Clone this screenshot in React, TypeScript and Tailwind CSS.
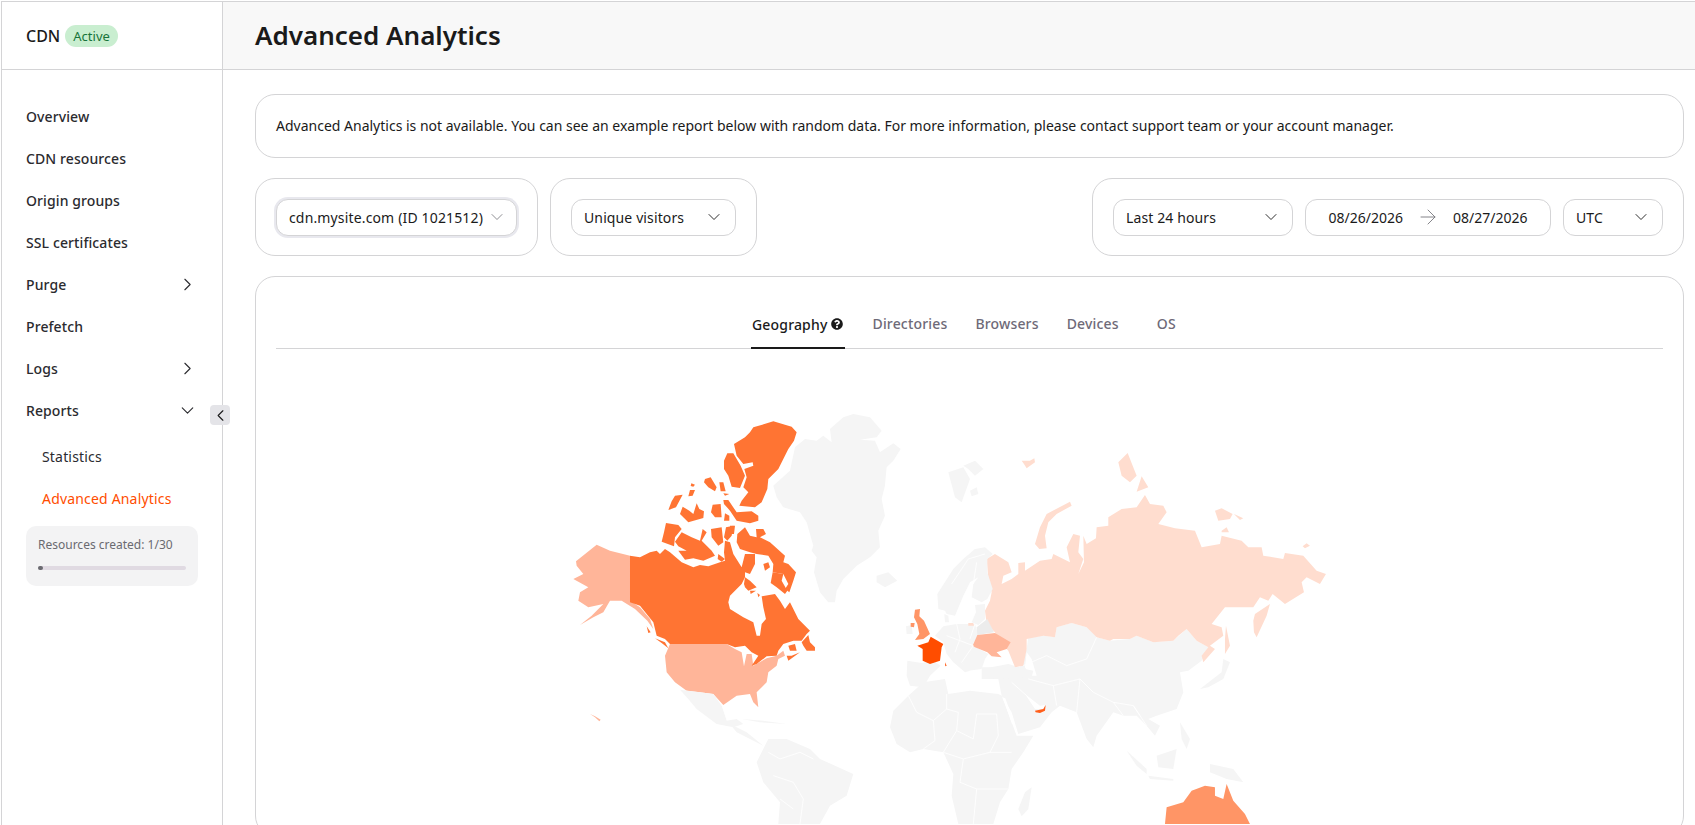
import { ArrowRight, ChevronDown, ChevronLeft, ChevronRight } from 'lucide-react';
import { FaQuestionCircle } from 'react-icons/fa';

const navItems = [
  { label: 'Overview' },
  { label: 'CDN resources' },
  { label: 'Origin groups' },
  { label: 'SSL certificates' },
  { label: 'Purge', icon: 'right' },
  { label: 'Prefetch' },
  { label: 'Logs', icon: 'right' },
  { label: 'Reports', icon: 'down' },
];

const grey = '#f5f5f5';
const canada = '#ff7433';
const usa = '#ffb599';
const uk = '#ff9566';
const russia = '#ffddcf';

type Shape = [string, string];

// each group below is traced at 3x from a crop of the map, see the translate on its <g>
const westShapes: Shape[] = [
  [grey, 'M640 260L690 215 705 145 735 120 770 125 790 110 815 130 810 90 850 55 880 45 930 55 965 95 950 115 900 122 945 125 960 160 1000 133 1022 150 1000 185 980 205 975 260 965 300 975 350 955 395 960 445 930 475 890 500 850 540 830 575 825 610 805 610 780 580 762 520 770 475 755 455 760 440 740 370 720 340 670 325 650 295Z'],
  [grey, 'M950 530L985 520 1012 545 975 565 950 550Z'],
  [usa, 'M48 487L110 437 150 455 210 470 210 605 240 625 270 660 280 690 262 665 225 630 185 605 150 605 130 640 100 655 60 678 95 650 130 615 85 625 55 605 60 580 85 565 40 540 70 525 50 500Z'],
  [usa, 'M330 735L500 735 525 750 545 760 552 802 560 765 575 765 580 800 620 778 650 770 670 755 675 770 655 780 650 800 625 820 620 850 590 880 595 925 580 910 570 885 530 890 490 918 460 885 420 880 380 875 345 850 320 820 315 770Z'],
  [usa, 'M90 945L105 952 122 962 118 967 105 955Z'],
  [grey, 'M360 872L420 880 460 885 485 920 500 965 530 960 550 975 520 985 470 975 410 930 385 900Z'],
  [grey, 'M510 975L560 1000 610 1040 570 1020 530 1000ZM545 960L610 965 680 975 600 970Z'],
  [grey, 'M590 1090L625 1020 680 1020 750 1050 780 1080 880 1125 860 1190 810 1220 780 1275 655 1275 660 1210 610 1150Z'],
];

const westBorders = [
  'M625 1060L660 1080 720 1060 760 1080',
  'M640 1130L700 1150 730 1200 720 1275',
  'M660 1200L700 1230',
  'M995 960L1060 990 1120 960 1190 935 1260 945 1320 940',
  'M1060 990L1050 1050M1120 960L1130 1010 1190 1030 1260 1020',
  'M1190 935L1200 1020 1180 1090 1270 1060',
];

const arcticShapes: Shape[] = [
  [canada, 'M310 40L370 22 425 38 440 55 432 80 415 105 400 135 385 165 355 195 352 225 335 265 315 280 268 275 275 260 295 235 280 220 290 190 283 165 310 155 308 145 280 150 260 125 252 90 285 70 300 55Z'],
  [canada, 'M232 118L250 118 272 155 285 185 270 222 245 218 235 185 222 165 222 140Z'],
  [canada, 'M165 195L182 190 200 220 195 232 175 220 162 205ZM208 205L220 205 227 232 212 232ZM124 208L135 212 130 218 122 216ZM120 228L135 228 128 245 115 247ZM220 238L238 240 225 245ZM75 245L98 242 78 280 55 288 65 262Z'],
  [canada, 'M98 278L118 290 130 300 140 268 148 285 162 292 160 312 115 325 90 300ZM188 272L212 270 215 310 195 310 183 295ZM225 298L238 305 238 320 222 320Z'],
  [canada, 'M220 258L235 258 260 295 305 292 325 305 325 320 300 328 260 320 240 290 222 270Z'],
];

const midArcticShapes: Shape[] = [
  [canada, 'M48 42L85 48 95 60 75 85 72 112 35 98 42 70Z'],
  [canada, 'M95 70L125 85 150 95 158 60 170 70 155 95 185 125 195 140 160 155 130 148 105 152 85 125 110 125 85 112 75 98Z'],
  [canada, 'M183 60L215 55 220 100 205 110 185 85ZM228 55L250 50 245 80 232 95 222 85ZM205 135L225 150 215 158 203 150Z'],
];

const baffinShapes: Shape[] = [
  [canada, 'M22 75L45 55 60 80 80 85 78 60 100 60 108 75 90 85 120 100 165 140 160 160 175 165 198 190 190 215 178 250 165 240 175 225 160 195 128 190 130 165 115 140 80 135 60 130 30 120 20 100Z'],
  [canada, 'M128 190L160 195 155 215 172 245 165 255 140 235 122 222Z'],
  [canada, 'M100 165L115 160 120 175 105 185ZM0 50L15 50 12 75 0 75Z'],
  [canada, 'M45 205L60 215 80 235 55 245 45 235 42 225ZM60 245L78 245 62 255ZM82 252L90 258 85 265Z'],
];

const canadaShapes: Shape[] = [
  [canada, 'M30 50L60 55 90 40 110 35 120 45 135 30 150 40 185 70 220 85 240 78 265 82 300 70 315 65 312 40 315 5 330 10 340 45 365 85 375 45 405 45 405 75 390 105 375 100 375 115 365 135 330 170 325 190 330 210 370 235 400 250 410 290 420 290 425 255 438 240 430 205 425 172 465 165 480 185 495 210 510 190 535 240 570 275 560 285 545 305 520 305 490 315 475 335 470 350 440 352 410 375 395 380 415 350 395 340 375 320 345 325 320 315 150 315 135 300 110 290 100 250 60 200 30 190Z'],
  [canada, 'M545 310L565 288 570 310 585 325 585 335 560 335 550 320ZM515 350L540 340 505 365 500 350ZM505 320L525 315 530 335 510 335ZM80 262L92 280 85 282ZM105 298L135 310 145 328 125 312Z'],
];

const eastShapes: Shape[] = [
  [grey, 'M205 160L250 145 270 180 245 250 225 235ZM250 140L285 125 310 150 285 170 265 150ZM270 215L290 205 295 225 275 232Z'],
  [grey, 'M445 655L490 650 525 655 530 625 575 612 620 625 650 655 690 665 750 660 770 650 820 670 880 665 920 630 950 665 985 685 965 725 925 755 900 760 910 820 890 870 830 890 805 900 840 920 825 950 800 920 770 890 730 890 700 880 650 950 640 985 620 960 590 880 540 860 515 880 480 925 415 945 395 880 365 830 355 780 305 780 305 750 385 735 420 745 440 690Z'],
  [grey, 'M30 925L40 875 85 830 130 790 195 780 205 825 270 815 355 825 365 830 395 910 410 950 460 950 430 1000 395 1050 385 1110 360 1150 340 1215 235 1215 215 1130 220 1065 190 1000 130 990 90 1000 50 975Z'],
  [grey, 'M435 1120L455 1105 445 1170 425 1192 415 1170ZM740 995L800 1050 800 1065 770 1040ZM805 1070L880 1080 880 1085 810 1080ZM830 1010L890 990 880 1050 835 1045ZM900 910L930 960 920 990 905 960ZM990 1035L1060 1050 1090 1090 1040 1080 990 1060ZM960 810L1025 760 1030 720 1050 730 1030 780 985 805Z'],
  ['#ffffff', 'M440 700L455 720 470 770 450 770 435 745ZM435 825L480 860 495 858 490 870 465 870ZM368 835L376 838 404 915 396 915Z'],
  [russia, 'M320 420L345 405 385 430 395 460 370 470 365 495 395 480 415 465 415 432 435 430 435 455 480 425 515 420 520 405 570 430 560 385 580 345 600 350 595 400 610 420 595 465 612 430 610 350 620 375 648 358 650 325 685 320 685 295 725 270 770 265 795 228 810 255 850 260 860 280 835 315 885 328 945 335 965 385 1020 375 1025 350 1085 365 1105 385 1145 385 1150 410 1210 420 1215 402 1270 410 1310 455 1338 465 1320 495 1280 475 1265 490 1272 520 1215 555 1178 525 1165 545 1140 535 1120 565 1085 565 1035 565 995 615 1025 625 1030 650 990 680 1005 690 970 730 965 710 985 685 950 665 920 630 895 650 880 665 820 670 770 650 750 660 700 660 690 665 650 655 620 625 575 612 530 625 525 655 490 650 440 660 440 690 430 740 405 745 385 695 355 660 345 640 320 615 315 575 330 545 335 520 325 480Z'],
  [russia, 'M465 375L480 325 500 285 570 248 575 260 530 285 505 310 495 350 500 388 478 390ZM715 130L743 102 770 170 750 190 725 170ZM785 172L805 205 770 218ZM425 125L450 125 463 118 465 130 440 148 432 135ZM1005 275L1025 268 1058 285 1050 300 1015 305ZM1062 285L1090 298 1080 303ZM1025 335L1040 325 1047 340 1025 340ZM1268 382L1280 373 1290 380 1275 388ZM1120 605L1125 585 1170 555 1160 590 1130 655 1122 640ZM1038 620L1050 680 1035 705 1035 660Z'],
  ['#ff5e1a', 'M465 875L490 870 497 858 495 875 480 882 467 880Z'],
  [uk, 'M855 1215L860 1165 910 1150 935 1115 975 1100 1005 1105 1005 1130 1030 1140 1040 1095 1060 1145 1095 1185 1110 1215Z'],
];

const eastBorders = [
  'M85 830L110 880 160 905 200 870 200 825',
  'M200 870L235 880 230 935 280 960 290 885 350 885',
  'M160 905L165 965 130 990',
  'M230 935L190 1000 250 1020 330 1000 395 1000',
  'M250 1020L240 1090 290 1110 385 1110',
  'M290 1110L280 1215',
  'M350 885L355 950 330 1000',
  'M445 780L520 800 600 780 640 820 700 850 730 890',
  'M430 740L500 710 560 740 620 720 650 655',
  'M520 800L530 860',
  'M600 780L590 880',
  'M700 850L760 860 800 920',
  'M395 790L440 830',
  'M760 860L780 890',
];

const europeShapes: Shape[] = [
  [grey, 'M112 165L160 90 190 60 225 30 255 25 278 45 262 60 262 100 278 150 262 180 245 190 215 175 220 135 235 115 210 130 190 170 165 230 140 225 135 215 115 210Z'],
  [grey, 'M225 198L255 195 255 240 235 258 215 250 228 220ZM133 225L145 230 147 250 135 250Z'],
  [grey, 'M105 290L130 262 170 255 225 255 235 290 220 320 265 345 255 360 245 390 205 395 185 370 165 360 140 345 130 310Z'],
  [grey, 'M140 345L170 355 210 395 195 400 160 370ZM22 365L65 372 100 365 122 380 90 410 70 445 30 440 20 410ZM245 385L350 385 400 395 395 415 250 420ZM18 262L35 258 38 285 20 285Z'],
  ['#ececec', 'M230 265L262 240 282 280 232 288Z'],
  [russia, 'M205 252L220 252 222 260 205 260Z'],
  [usa, 'M232 288L285 282 332 310 320 330 290 340 305 355 275 352 262 340 225 325 218 320Z'],
  [uk, 'M45 212L60 210 58 232 72 245 90 285 70 300 45 303 58 285 52 255 42 235ZM32 252L44 252 42 265 32 263Z'],
  ['#ff4d00', 'M92 293L130 315 125 325 120 365 90 375 68 365 68 330 52 320 85 310ZM135 370L140 380 136 382Z'],
];

const europeBorders = [
  'M155 135L205 60 255 45',
  'M220 135L230 70',
  'M170 255L180 300 165 340',
  'M225 255L210 300',
  'M140 290L220 320',
  'M185 370L220 320',
];

function MapGroup({ x, y, shapes, borders = [] }: { x: number; y: number; shapes: Shape[]; borders?: string[] }) {
  return (
    <g transform={`translate(${x} ${y}) scale(0.3333)`}>
      {shapes.map(([fill, d], i) => (
        <path key={i} d={d} fill={fill} />
      ))}
      {borders.map((d, i) => (
        <path key={i} d={d} fill="none" stroke="#ffffff" strokeWidth="2.5" />
      ))}
    </g>
  );
}

function Select({ label, className }: { label: string; className: string }) {
  return (
    <div className={`flex h-[37px] items-center justify-between rounded-[12px] border border-[#d4d4d6] bg-white pl-[12px] pr-[11px] text-[14px] tracking-[0.12px] text-[#1a1a1a] ${className}`}>
      <span>{label}</span>
      <ChevronDown size={20} strokeWidth={1.1} />
    </div>
  );
}

export default function App() {
  return (
    <div className="ml-px mt-px flex h-[824px] w-[1694px] overflow-hidden border-l border-t border-[#d4d4d6] bg-white font-['Noto_Sans',sans-serif] text-[#1a1a1a]">
      <aside className="relative flex w-[221px] shrink-0 flex-col border-r border-[#d4d4d6]">
        <div className="flex h-[68px] shrink-0 items-center gap-[5px] border-b border-[#d4d4d6] pl-[24px]">
          <span className="text-[16px] font-medium">CDN</span>
          <span className="rounded-full bg-[#c9eed0] px-[8px] py-[2px] text-[13px] leading-[18px] text-[#17743a]">Active</span>
        </div>
        <nav className="pl-[24px] pr-[24px] pt-[25px] text-[14px] font-medium tracking-[0.1px] text-[#2b2b2f]">
          {navItems.map((item) => (
            <div key={item.label} className="flex h-[42px] items-center justify-between">
              <span>{item.label}</span>
              {item.icon === 'right' && <ChevronRight size={21} strokeWidth={1.3} />}
              {item.icon === 'down' && <ChevronDown size={21} strokeWidth={1.3} />}
            </div>
          ))}
          <div className="mt-[4px] flex h-[42px] items-center pl-[16px] font-normal tracking-[0.18px]">Statistics</div>
          <div className="flex h-[42px] items-center pl-[16px] font-normal tracking-[0.18px] text-[#ff4d00]">Advanced Analytics</div>
          <div className="mt-[7px] h-[60px] w-[172px] rounded-[10px] bg-[#f3f3f4] px-[12px] pt-[11px] tracking-normal">
            <div className="text-[12px] font-normal leading-[16px] text-[#6a6a70]">Resources created: 1/30</div>
            <div className="mt-[13px] h-[4px] w-[148px] rounded-full bg-[#e0dae2]">
              <div className="h-[4px] w-[5px] rounded-full bg-[#6a6a70]" />
            </div>
          </div>
        </nav>
        <button className="absolute left-[208px] top-[403px] flex h-[20px] w-[20px] items-center justify-center rounded-[4px] bg-[#e4e4e8]">
          <ChevronLeft size={19} strokeWidth={1.4} />
        </button>
      </aside>

      <div className="flex min-w-0 flex-1 flex-col">
        <header className="flex h-[68px] shrink-0 items-center border-b border-[#d4d4d6] bg-[#f8f8f8] pl-[32px]">
          <h1 className="text-[26px] font-semibold">Advanced Analytics</h1>
        </header>
        <main className="flex flex-col gap-[20px] pl-[32px] pr-[11px] pt-[24px]">
          <div className="flex h-[64px] items-center rounded-[20px] border border-[#d4d4d6] pb-[2px] pl-[20px] text-[14px]">
            Advanced Analytics is not available. You can see an example report below with random data. For more information, please contact support team or your account manager.
          </div>

          <div className="flex gap-[12px]">
            <div className="flex h-[78px] items-center rounded-[20px] border border-[#d4d4d6] px-[20px]">
              <div className="flex h-[37px] w-[241px] items-center justify-between rounded-[12px] border border-[#d4d4d6] bg-white pl-[12px] pr-[9px] text-[14px] tracking-[0.15px] shadow-[0_0_0_2px_#e8e8ee]">
                <span>cdn.mysite.com (ID 1021512)</span>
                <ChevronDown size={20} strokeWidth={1} className="text-[#77777d]" />
              </div>
            </div>
            <div className="flex h-[78px] items-center rounded-[20px] border border-[#d4d4d6] px-[20px]">
              <Select label="Unique visitors" className="w-[165px]" />
            </div>
            <div className="ml-auto flex h-[78px] w-[592px] items-center gap-[12px] rounded-[20px] border border-[#d4d4d6] px-[20px]">
              <Select label="Last 24 hours" className="w-[180px]" />
              <div className="flex h-[37px] w-[246px] items-center justify-center gap-[13px] rounded-[12px] border border-[#d4d4d6] text-[14px]">
                <span>08/26/2026</span>
                <ArrowRight size={24} strokeWidth={0.9} className="text-[#77777d]" />
                <span>08/27/2026</span>
              </div>
              <Select label="UTC" className="w-[100px]" />
            </div>
          </div>

          <section className="h-[560px] rounded-[20px] border border-[#d4d4d6]">
            <div className="mx-[20px] flex h-[72px] items-end border-b border-[#d4d4d6] pl-[475px] text-[14px] font-medium tracking-[0.17px] text-[#6e6a78]">
              <div className="-mb-px flex h-[48px] items-start gap-[4px] border-b-2 border-[#1a1a1a] pl-px pr-[2px] pt-[13px] text-[#1a1a1a]">
                Geography <FaQuestionCircle size={12} className="mt-[4px]" />
              </div>
              <div className="ml-[27px] h-[48px] pt-[13px]">Directories</div>
              <div className="ml-[28px] h-[48px] pt-[13px]">Browsers</div>
              <div className="ml-[28px] h-[48px] pt-[13px]">Devices</div>
              <div className="ml-[38px] h-[48px] pt-[13px]">OS</div>
            </div>
            <svg viewBox="256 350 1427 475" className="block h-[475px] w-[1427px]">
              <MapGroup x={560} y={400} shapes={westShapes} borders={westBorders} />
              <MapGroup x={650} y={415} shapes={arcticShapes} />
              <MapGroup x={650} y={510} shapes={midArcticShapes} />
              <MapGroup x={730} y={510} shapes={baffinShapes} />
              <MapGroup x={620} y={540} shapes={canadaShapes} />
              <MapGroup x={880} y={420} shapes={eastShapes} borders={eastBorders} />
              <MapGroup x={900} y={540} shapes={europeShapes} borders={europeBorders} />
            </svg>
          </section>
        </main>
      </div>
    </div>
  );
}
